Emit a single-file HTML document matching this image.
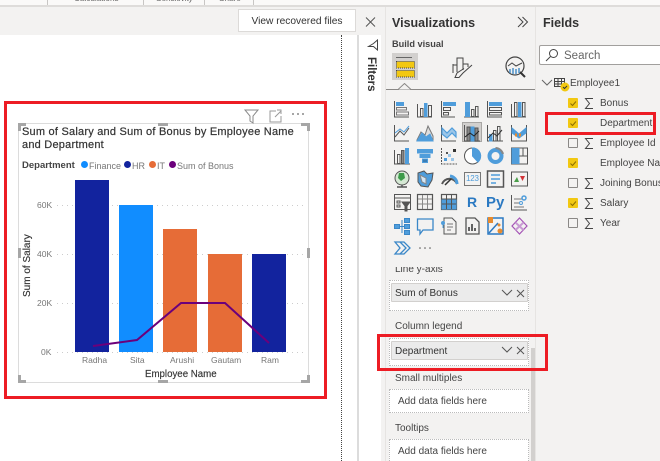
<!DOCTYPE html>
<html><head><meta charset="utf-8">
<style>
html,body{margin:0;padding:0;background:#fff}
#p{position:relative;width:660px;height:461px;overflow:hidden;background:#fff;font-family:"Liberation Sans",sans-serif;color:#252423}
#p div{position:absolute;white-space:nowrap}
.well{background:#fff;border:1px dotted #bbb;box-sizing:border-box}
.chip{background:#ebebeb;border:1px solid #d2d0ce;box-sizing:border-box;border-radius:1px;font-size:10px;line-height:20px;padding-left:3px;color:#333}
.cb{width:8px;height:8px;border:1px solid #8a8886;background:#f3f2f1;border-radius:1px}
.on{background:#f2c811;border-color:#f2c811}
.f{font-size:10px;line-height:14px;color:#444}
.lb{font-size:10px;line-height:14px;color:#444}
.red{border:3px solid #ed1c24;box-sizing:border-box}
.leg{font-size:9px;line-height:12px;color:#777}
.dot{width:7px;height:7px;border-radius:50%}
.ax{font-size:8.5px;line-height:10px;color:#777}
.rb{font-size:8.2px;line-height:10px;color:#666;top:-6px}
</style></head><body>
<div id="p">
<div style="left:0;top:0;width:381px;height:35px;background:#f3f2f1"></div>
<div style="left:381px;top:0;width:279px;height:461px;background:#f3f2f1"></div>
<div style="left:0;top:0;width:660px;height:5px;background:#faf9f8"></div>
<div style="left:0;top:5px;width:660px;height:2px;background:#dedcda"></div>
<div class="rb" style="left:74px">Calculations</div>
<div class="rb" style="left:156px">Sensitivity</div>
<div class="rb" style="left:219px">Share</div>
<div style="left:47px;top:0;width:1px;height:5px;background:#c8c6c4"></div>
<div style="left:143px;top:0;width:1px;height:5px;background:#c8c6c4"></div>
<div style="left:204px;top:0;width:1px;height:5px;background:#c8c6c4"></div>
<div style="left:253px;top:0;width:1px;height:5px;background:#c8c6c4"></div>

<div style="left:238px;top:9px;width:118px;height:23px;box-sizing:border-box;background:#fff;border:1px solid #dcdad8;font-size:10.2px;line-height:23px;text-align:center;color:#333">View recovered files</div>
<svg style="position:absolute;left:364px;top:16px" width="13" height="13"><path d="M2 1.500L11 10.500M11 1.500L2 10.500" stroke="#555" stroke-width="1" fill="none"/></svg>

<div style="left:341px;top:35px;height:426px;border-left:1px dotted #444"></div>
<div style="left:357px;top:35px;width:2px;height:426px;background:#dcdcdc"></div>
<svg style="position:absolute;left:367px;top:39px" width="12" height="12"><path d="M10.500 1V11L6.500 7.500H1.500L6.500 4.500Z" fill="none" stroke="#444" stroke-width="1"/></svg>
<div style="font-size:11.500px;font-weight:bold;line-height:14px;color:#333;transform:rotate(90deg);transform-origin:0 0;left:378px;top:57px">Filters</div>

<!-- Visual -->
<div style="left:18px;top:123px;width:291px;height:260px;box-sizing:border-box;border:1px solid #dcdcdc"></div>
<svg style="position:absolute;left:0;top:100px" width="340" height="300">
<path d="M245 10H258L253 16V23L250 21V16Z" fill="none" stroke="#8a8a8a"/>
<path d="M276 11H270V22H281V16M275 17L281 11M277 10H281V14" fill="none" stroke="#9a9a9a"/>
<circle cx="293" cy="14" r=".9" fill="#666"/><circle cx="298" cy="14" r=".9" fill="#666"/><circle cx="303" cy="14" r=".9" fill="#666"/>
<g fill="none" stroke="#a6a6a6" stroke-width="3">
<path d="M19.500 31V24.500H26M301 24.500H308.500V31M19.500 275V281.500H26M301 281.500H308.500V275"/>
</g>
<rect x="158" y="23" width="10" height="3" fill="#a6a6a6"/>
<rect x="158" y="280" width="10" height="3" fill="#a6a6a6"/>
<rect x="18" y="148" width="3" height="10" fill="#a6a6a6"/>
<rect x="307" y="148" width="3" height="10" fill="#a6a6a6"/>
<g stroke="#ccc" stroke-dasharray="1 4" stroke-width="1">
<path d="M57 105.500H303M57 154.500H303M57 203.500H303M57 252.500H303"/>
</g>
<g>
<rect x="75" y="80" width="34" height="172" fill="#12239e"/>
<rect x="119" y="105" width="34" height="147" fill="#118dff"/>
<rect x="163" y="129" width="34" height="123" fill="#e66c37"/>
<rect x="208" y="154" width="34" height="98" fill="#e66c37"/>
<rect x="252" y="154" width="34" height="98" fill="#12239e"/>
</g>
<polyline points="93,246 137,240 181,203 225,203 269,243" fill="none" stroke="#6b007b" stroke-width="2"/>
</svg>
<div class="red" style="left:4px;top:101px;width:323px;height:298px"></div>
<div style="left:22px;top:125px;font-size:11px;line-height:14px;color:#333;letter-spacing:.22px;-webkit-text-stroke:.2px #333">Sum of Salary and Sum of Bonus by Employee Name</div>
<div style="left:22px;top:138px;font-size:11px;line-height:14px;color:#333;letter-spacing:.22px;-webkit-text-stroke:.2px #333">and Department</div>
<div style="left:22px;top:160px;font-size:9.500px;font-weight:bold;line-height:12px;color:#444">Department</div>
<div class="dot" style="left:81px;top:161px;background:#118dff"></div><div class="leg" style="left:89px;top:160px">Finance</div>
<div class="dot" style="left:124px;top:161px;background:#12239e"></div><div class="leg" style="left:132px;top:160px">HR</div>
<div class="dot" style="left:149px;top:161px;background:#e66c37"></div><div class="leg" style="left:157px;top:160px">IT</div>
<div class="dot" style="left:169px;top:161px;background:#6b007b"></div><div class="leg" style="left:177px;top:160px">Sum of Bonus</div>
<div class="ax" style="left:37px;top:200px">60K</div>
<div class="ax" style="left:37px;top:249px">40K</div>
<div class="ax" style="left:37px;top:298px">20K</div>
<div class="ax" style="left:41px;top:347px">0K</div>
<div style="left:22px;top:297px;font-size:10px;line-height:12px;color:#333;transform:rotate(-90deg);transform-origin:0 0;-webkit-text-stroke:.15px #333">Sum of Salary</div>
<div class="ax" style="left:82px;top:355px">Radha</div>
<div class="ax" style="left:130px;top:355px">Sita</div>
<div class="ax" style="left:170px;top:355px">Arushi</div>
<div class="ax" style="left:211px;top:355px">Gautam</div>
<div class="ax" style="left:261px;top:355px">Ram</div>
<div style="left:145px;top:368px;font-size:9.700px;line-height:13px;color:#333;-webkit-text-stroke:.15px #333">Employee Name</div>

<!-- Viz panel -->
<div style="left:385px;top:7px;width:1px;height:454px;background:#e6e4e2"></div>
<div style="left:535px;top:7px;width:1px;height:454px;background:#e6e4e2"></div>
<div style="left:392px;top:14px;font-size:12.500px;font-weight:bold;line-height:18px;color:#333">Visualizations</div>
<svg style="position:absolute;left:517px;top:16px" width="12" height="12"><path d="M1 1L6 6L1 11M5.500 1L10.500 6L5.500 11" fill="none" stroke="#444"/></svg>
<div style="left:392px;top:38px;font-size:9.200px;font-weight:bold;line-height:13px;color:#444">Build visual</div>
<div style="left:392px;top:53px;width:26px;height:27px;background:#d2d0ce"></div>
<svg style="position:absolute;left:392px;top:53px" width="140" height="40">
<path d="M4 4.500H20" stroke="#666"/>
<rect x="4.500" y="8.500" width="18" height="6.500" fill="#f2c811" stroke="#444" stroke-dasharray="1 1"/>
<rect x="4.500" y="17.500" width="18" height="6.500" fill="#f2c811" stroke="#444" stroke-dasharray="1 1"/>
<path d="M61 11V20M61 12H65V19M65 12V5H71V11H76V14M71 11V17M80 12L71 20L67 24.500H63L65 20L72 15.500" fill="none" stroke="#444"/>
<circle cx="123" cy="13" r="9" fill="none" stroke="#444" stroke-width="1.200"/>
<path d="M128 19L133 24" stroke="#333" stroke-width="2"/>
<path d="M116 13L120 10L124 13L130 10" fill="none" stroke="#444"/>
<path d="M118 16V20M121 15V21M124 16V21M127 15V20" stroke="#4a90c8" stroke-width="1.500"/>
</svg>
<div style="left:386px;top:89px;width:149px;height:1px;background:#8a8886"></div>
<svg style="position:absolute;left:398px;top:83px" width="16" height="8"><path d="M0 6.500L6.500 .5L13 6.500" fill="#f3f2f1" stroke="#8a8886"/></svg>
<div style="left:462px;top:122px;width:20px;height:20px;background:#d2d0ce;border:1px solid #a8a6a4;box-sizing:border-box"></div>

<svg style="position:absolute;left:385px;top:90px" width="150" height="175" fill="none" stroke="#555" stroke-width="1">
<!-- row1 -->
<g transform="translate(9,11)"><path d="M.5 0V16H15"/><rect x="2.500" y="1.500" width="7" height="3" fill="#4f9ddb" stroke="#4f9ddb"/><rect x="2.500" y="6.500" width="10" height="2.500" stroke="#777"/><rect x="2.500" y="11" width="12" height="3" stroke="#777"/></g>
<g transform="translate(32,11)"><path d="M0 16H15M.5 3V16"/><rect x="3.500" y="7.500" width="2.500" height="8"/><rect x="7.500" y="2.500" width="2.500" height="13" fill="#4f9ddb" stroke="#4f9ddb"/><rect x="11.500" y="4.500" width="3" height="11"/></g>
<g transform="translate(56,11)"><path d="M.5 0V16H14"/><rect x="2.500" y="1.500" width="12" height="3" fill="#4f9ddb" stroke="#4f9ddb"/><rect x="2.500" y="6.500" width="7" height="3"/><rect x="2.500" y="11.500" width="5" height="2.500"/></g>
<g transform="translate(79,11)"><path d="M0 16H15"/><rect x="1.500" y="1.500" width="4" height="14" fill="#4f9ddb" stroke="#4f9ddb"/><rect x="7.500" y="8.500" width="2.500" height="7"/><rect x="11.500" y="5.500" width="2.500" height="10"/></g>
<g transform="translate(102,11)"><path d="M.5 0V16H15"/><rect x="2.500" y="1.500" width="12" height="3" fill="#4f9ddb" stroke="#4f9ddb"/><rect x="2.500" y="6.500" width="12" height="3"/><rect x="2.500" y="11.500" width="12" height="2.500"/></g>
<g transform="translate(126,11)"><path d="M0 16H15M.5 3V16"/><rect x="3.500" y="1.500" width="2.500" height="14"/><rect x="7.500" y="1.500" width="2.500" height="14" fill="#4f9ddb" stroke="#4f9ddb"/><rect x="11.500" y="1.500" width="2.500" height="14"/></g>
<!-- row2 -->
<g transform="translate(9,34)"><path d="M.5 1V17H15"/><path d="M1 13L6 7L10 11L15 4" stroke="#555"/><path d="M1 9L6 5L10 8L15 2" stroke="#4f9ddb"/></g>
<g transform="translate(32,34)"><path d="M0 17H16"/><path d="M0 16L4 8L8 11L11 2L16 12V16Z" fill="#ddd" stroke="#777"/><path d="M0 17L5 9L9 13L13 10L16 17Z" fill="#4f9ddb" stroke="#4f9ddb"/></g>
<g transform="translate(56,34)"><path d="M.5 1V17H15"/><path d="M1 4L6 9L11 4L15 8V13L11 9L6 14L1 10Z" fill="#9cc6e8" stroke="#4f9ddb" stroke-width="1.200"/></g>
<g transform="translate(79,34)"><path d="M.5 1V17H16"/><rect x="3" y="3" width="3" height="14" fill="#888"/><rect x="7" y="3" width="3" height="14" fill="#4f9ddb" stroke="#4f9ddb"/><rect x="11" y="4" width="3" height="13" fill="#888"/><path d="M1 13L6 9L10 12L15 7" stroke="#222"/></g>
<g transform="translate(102,34)"><path d="M.5 1V17H16"/><rect x="6.500" y="6.500" width="2.500" height="10.500"/><rect x="10.500" y="2.500" width="2.500" height="14.500"/><rect x="2.500" y="10.500" width="2.500" height="6.500" fill="#4f9ddb" stroke="#4f9ddb"/><path d="M1 14L6 9L10 12L15 6" stroke="#333"/></g>
<g transform="translate(126,34)"><path d="M.5 1V17H16M15.500 1V17"/><path d="M1 4L8 10L15 4V9L8 14L1 9Z" fill="#4f9ddb" stroke="#4f9ddb"/><path d="M4 11H12" stroke="#e68a2e" stroke-width="3" stroke-dasharray="2 2"/></g>
<!-- row3 -->
<g transform="translate(9,57)"><path d="M0 17H16M.5 3V17"/><rect x="3.500" y="7.500" width="2.500" height="9"/><rect x="7.500" y="3.500" width="2.500" height="13" fill="#888"/><rect x="11.500" y="1.500" width="3" height="15" fill="#4f9ddb" stroke="#4f9ddb"/></g>
<g transform="translate(32,57)" stroke="#4f9ddb"><rect x="0.500" y="2.500" width="15" height="3.500" fill="#4f9ddb"/><rect x="3" y="7.500" width="10" height="3" fill="#4f9ddb"/><rect x="5.500" y="12" width="5" height="3.500" fill="#3a7db5"/></g>
<g transform="translate(56,57)"><path d="M.5 1V17H16" stroke-dasharray="2 1"/><g stroke="none"><rect x="3" y="11" width="3" height="3" fill="#4f9ddb"/><rect x="7" y="7" width="3" height="3" fill="#9cc6e8"/><rect x="5" y="5" width="2" height="2" fill="#555"/><rect x="12" y="2" width="3" height="3" fill="#333"/><rect x="10" y="11" width="3" height="3" fill="#9cc6e8"/></g></g>
<g transform="translate(79,57)"><circle cx="8.500" cy="9" r="8" fill="#fff"/><path d="M8.500 9V1A8 8 0 0 1 14 15Z" fill="#4f9ddb" stroke="#4f9ddb"/></g>
<g transform="translate(102,57)"><circle cx="8.500" cy="9" r="6" stroke="#4f9ddb" stroke-width="4"/><path d="M8.500 1A8 8 0 0 1 16 7" stroke="#888" stroke-width="2"/></g>
<g transform="translate(126,57)"><rect x=".5" y="1" width="16" height="16"/><rect x="1" y="1.500" width="7" height="15" fill="#4f9ddb" stroke="#4f9ddb"/><path d="M8 9H16M12 1V9"/></g>
<!-- row4 -->
<g transform="translate(9,80)"><circle cx="8" cy="8" r="7" fill="#d5e8d4" stroke="#555"/><path d="M5 3L10 3L11 8L7 11L4 8Z" fill="#3d9b4a" stroke="none"/><path d="M3 17H13M8 15V17" stroke-width="1.500"/></g>
<g transform="translate(32,80)"><path d="M1 3L7 1L10 4L16 3L15 10L11 17L4 16L1 12Z" fill="#4f9ddb" stroke="#555"/><path d="M3 5L9 8L9 14L5 12Z" fill="#d4e6f5" stroke="#888"/></g>
<g transform="translate(56,80)"><path d="M1 14A8 8 0 0 1 16 14" stroke-width="2" stroke="#555"/><path d="M9 6A8 8 0 0 1 16 14" stroke="#4f9ddb" stroke-width="3"/><path d="M4 15L10 9" stroke="#333" stroke-width="1.500"/></g>
<g transform="translate(79,80)"><rect x=".5" y="2.500" width="16" height="13" stroke="#777"/></g>
<g transform="translate(102,80)"><rect x=".5" y="1" width="16" height="16" stroke-width="1.500"/><path d="M4 5H13M4 9H13M4 13H9" stroke="#4f9ddb" stroke-width="1.500"/></g>
<g transform="translate(126,80)"><rect x=".5" y="2" width="16" height="14"/><path d="M3 12L6 7L8 12Z" fill="#4a9e4a" stroke="none"/><path d="M9 6H14L11.500 11Z" fill="#d13438" stroke="none"/></g>
<!-- row5 -->
<g transform="translate(9,104)"><rect x=".5" y=".5" width="16" height="15"/><path d="M1 4H16"/><rect x="3" y="7" width="3" height="2"/><rect x="3" y="11" width="3" height="2"/><path d="M8 8H16L13 12V17H11V12Z" fill="#555"/></g>
<g transform="translate(32,104)"><rect x=".5" y=".5" width="15" height="15" stroke-width="1.200"/><path d="M1 5H15M1 10H15M5.500 1V15M10.500 1V15" stroke="#888"/></g>
<g transform="translate(56,104)"><rect x=".5" y=".5" width="15" height="15" stroke-width="1.200"/><rect x="1" y="6" width="14" height="9" fill="#4f9ddb" stroke="#4f9ddb"/><path d="M1 5H15M1 10H15M5.500 1V15M10.500 1V15" stroke="#555"/></g>
<g transform="translate(126,104)"><path d="M.5 1V16H16"/><path d="M3 5H11M3 9H8M3 13H13" stroke="#777"/><circle cx="13" cy="4" r="2" stroke="#4f9ddb" stroke-width="1.500"/><circle cx="10" cy="9" r="1.500" stroke="#4f9ddb"/></g>
<!-- row6 -->
<g transform="translate(9,127)" stroke="#3a87c8" fill="#4f9ddb"><rect x="0.500" y="7.500" width="5" height="4"/><rect x="10.500" y="1.500" width="5" height="4"/><rect x="10.500" y="7.500" width="5" height="4"/><rect x="10.500" y="13.500" width="5" height="4"/><path d="M5 9.500H10M8 3V16" fill="none"/></g>
<g transform="translate(32,127)" stroke="#3a87c8" stroke-width="1.300"><path d="M.5 2H16V13H6L3 17V13H.5Z"/></g>
<g transform="translate(56,127)"><path d="M3 1H11L15 5V17H3Z"/><path d="M6 7H12M6 10H12M6 13H10" stroke="#777"/><circle cx="2" cy="6" r="1.500" fill="#4f9ddb" stroke="#4f9ddb"/><path d="M2 8V11" stroke="#4f9ddb"/></g>
<g transform="translate(79,127)"><path d="M2 1H11L15 5V17H2Z" stroke-width="1.300"/><path d="M5 14V10M8 14V7M11 14V11" stroke="#333" stroke-width="1.500"/></g>
<g transform="translate(102,127)"><rect x="1" y="1" width="15" height="16" stroke="#2b79c2" stroke-width="1.500"/><path d="M2 16L11 6" stroke="#2b79c2" stroke-width="1.500"/><rect x="1" y="0" width="5" height="6" fill="#e68a2e" stroke="none"/><circle cx="13" cy="14" r="2.500" fill="#e68a2e" stroke="none"/><circle cx="12" cy="8" r="1.500" fill="#e68a2e" stroke="none"/></g>
<g transform="translate(126,127)" stroke="#a453b5"><path d="M8.500 1L16 9L8.500 17L1 9Z" stroke-width="1.200"/><path d="M4.500 5.500L12.500 13M12.500 5.500L4.500 13" stroke="#c89ad3" stroke-width="2"/></g>
<!-- row7 -->
<g transform="translate(9,150)" stroke="#3a87c8" stroke-width="1.300"><path d="M1 2H10L16 8L10 14H1L6 8Z"/><path d="M6 2L12 8L6 14"/></g>
<circle cx="35" cy="158" r=".8" fill="#555" stroke="none"/><circle cx="40" cy="158" r=".8" fill="#555" stroke="none"/><circle cx="45" cy="158" r=".8" fill="#555" stroke="none"/>
</svg>
<div style="left:466px;top:174px;font-size:8px;line-height:10px;color:#4f9ddb;letter-spacing:-.2px">123</div>
<div style="left:467px;top:194px;font-size:14px;font-weight:bold;line-height:17px;color:#2b79c2">R</div>
<div style="left:486px;top:194px;font-size:15px;font-weight:bold;line-height:18px;color:#2b79c2">Py</div>

<!-- wells -->
<div style="left:395px;top:264px;font-size:10px;line-height:12px;color:#444;height:12px;clip-path:inset(3px 0 0 0)">Line y-axis</div>
<div class="well" style="left:389px;top:280px;width:140px;height:31px"></div>
<div class="chip" style="left:391px;top:283px;width:137px;height:19px">Sum of Bonus</div>
<div class="lb" style="left:395px;top:320px">Column legend</div>
<div class="well" style="left:389px;top:338px;width:140px;height:28px"></div>
<div class="chip" style="left:391px;top:341px;width:137px;height:19px">Department</div>
<svg style="position:absolute;left:501px;top:287px" width="28" height="80" fill="none" stroke="#555">
<path d="M1 3L6 8L11 3M16 3L23 10M23 3L16 10"/>
<path d="M1 60L6 65L11 60M16 60L23 67M23 60L16 67"/>
</svg>
<div class="lb" style="left:395px;top:372px">Small multiples</div>
<div class="well" style="left:389px;top:389px;width:140px;height:24px;font-size:10px;line-height:24px;padding-left:8px;color:#444">Add data fields here</div>
<div class="lb" style="left:395px;top:422px">Tooltips</div>
<div class="well" style="left:389px;top:439px;width:140px;height:24px;font-size:10px;line-height:24px;padding-left:8px;color:#444">Add data fields here</div>
<div style="left:531px;top:348px;width:4px;height:113px;background:#d2d0ce"></div>
<div class="red" style="left:377px;top:334px;width:171px;height:37px"></div>

<!-- Fields -->
<div style="left:543px;top:14px;font-size:12.500px;font-weight:bold;line-height:18px;color:#333">Fields</div>
<div style="left:539px;top:45px;width:125px;height:20px;box-sizing:border-box;background:#fff;border:1px solid #a19f9d;border-radius:2px;font-size:11.500px;line-height:20px;padding-left:24px;color:#666">Search</div>
<svg style="position:absolute;left:545px;top:48px" width="14" height="14" fill="none" stroke="#444"><circle cx="8.500" cy="5.500" r="4"/><path d="M5.500 8.500L1 13"/></svg>
<svg style="position:absolute;left:541px;top:76px" width="30" height="20" fill="none"><path d="M1 4L6 9L11 4" stroke="#666"/><rect x="13.500" y="2.500" width="10" height="8" stroke="#444"/><path d="M14 5.500H24M14 8H24M17 3V11M20.500 3V11" stroke="#444"/><circle cx="24" cy="11" r="4.500" fill="#f2c811"/><path d="M22 11L23.500 12.500L26 10" stroke="#333"/></svg>
<div class="f" style="left:570px;top:77px">Employee1</div>

<div class="cb on" style="left:568px;top:98px"></div><div class="f" style="left:600px;top:97px">Bonus</div>
<div class="cb on" style="left:568px;top:118px"></div><div class="f" style="left:600px;top:117px">Department</div>
<div class="cb" style="left:568px;top:138px"></div><div class="f" style="left:600px;top:137px">Employee Id</div>
<div class="cb on" style="left:568px;top:158px"></div><div class="f" style="left:600px;top:157px">Employee Name</div>
<div class="cb" style="left:568px;top:178px"></div><div class="f" style="left:600px;top:177px">Joining Bonus</div>
<div class="cb on" style="left:568px;top:198px"></div><div class="f" style="left:600px;top:197px">Salary</div>
<div class="cb" style="left:568px;top:218px"></div><div class="f" style="left:600px;top:217px">Year</div>
<svg style="position:absolute;left:584px;top:97px" width="11" height="134" fill="none" stroke="#444">
<path d="M9 1.500H1.500L5.500 6.500L1.500 11.500H9"/>
<path d="M9 41.500H1.500L5.500 46.500L1.500 51.500H9"/>
<path d="M9 81.500H1.500L5.500 86.500L1.500 91.500H9"/>
<path d="M9 101.500H1.500L5.500 106.500L1.500 111.500H9"/>
<path d="M9 121.500H1.500L5.500 126.500L1.500 131.500H9"/>
</svg>
<svg style="position:absolute;left:568px;top:98px" width="12" height="110" fill="none" stroke="#8a6d00"><path d="M2.500 5.500L4.500 7.500L8 3.500M2.500 25.500L4.500 27.500L8 23.500M2.500 65.500L4.500 67.500L8 63.500M2.500 105.500L4.500 107.500L8 103.500"/></svg>
<div class="red" style="left:545px;top:112px;width:111px;height:23px"></div>
</div>
</body></html>
